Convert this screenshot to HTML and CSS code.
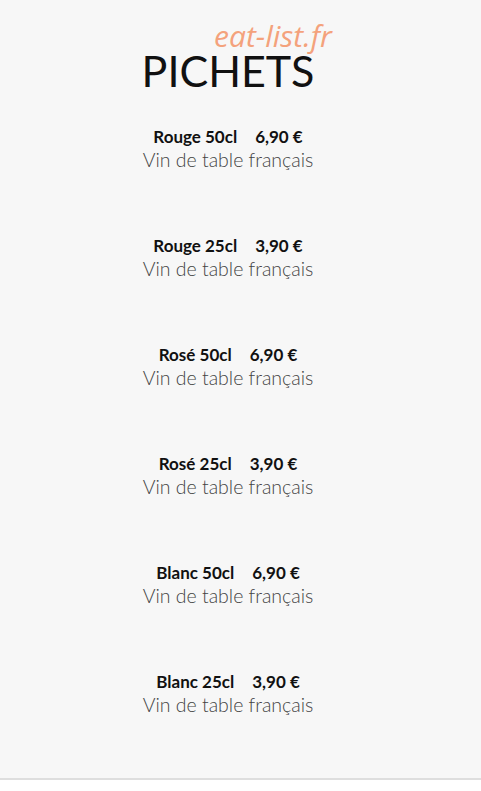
FILE: index.html
```html
<html>
<head>
    <title>Pichets</title>
    <link rel="stylesheet" href="styles.css">
</head>
<body>
    <div class="page">
        <div class="header">
            <div class="brand">eat-list.fr</div>
            <h1>PICHETS</h1>
        </div>
        <div class="menu">
            <div class="item">
                <div class="name"><span>Rouge 50cl</span><span>6,90 €</span></div>
                <div class="desc">Vin de table français</div>
            </div>
            <div class="item">
                <div class="name"><span>Rouge 25cl</span><span>3,90 €</span></div>
                <div class="desc">Vin de table français</div>
            </div>
            <div class="item">
                <div class="name"><span>Rosé 50cl</span><span>6,90 €</span></div>
                <div class="desc">Vin de table français</div>
            </div>
            <div class="item">
                <div class="name"><span>Rosé 25cl</span><span>3,90 €</span></div>
                <div class="desc">Vin de table français</div>
            </div>
            <div class="item">
                <div class="name"><span>Blanc 50cl</span><span>6,90 €</span></div>
                <div class="desc">Vin de table français</div>
            </div>
            <div class="item">
                <div class="name"><span>Blanc 25cl</span><span>3,90 €</span></div>
                <div class="desc">Vin de table français</div>
            </div>
        </div>
    </div>
</body>
</html>
```

FILE: styles.css
```css
body {
    margin: 0;
    background: #fff;
    font-family: Lato, "Noto Sans", sans-serif;
}
.page {
    background: #f7f7f7;
    border-bottom: 2px solid #dedede;
    height: 780px;
    padding-right: 25px;
    box-sizing: border-box;
}
.header {
    position: relative;
    text-align: center;
    padding-top: 42px;
}
.brand {
    position: absolute;
    top: 15px;
    left: 214px;
    font-family: "Open Sans", sans-serif;
    font-style: italic;
    font-size: 30px;
    color: #f4a27c;
}
h1 {
    margin: 0;
    font-size: 43px;
    font-weight: 400;
    color: #111;
    line-height: 58px;
}
.menu {
    display: flex;
    flex-direction: column;
    gap: 63px;
    margin-top: 26px;
    text-align: center;
}
.name {
    display: flex;
    justify-content: center;
    gap: 18px;
    font-size: 17px;
    font-weight: 700;
    color: #111;
    line-height: 21px;
}
.desc {
    font-size: 19.5px;
    font-weight: 300;
    color: #444;
    line-height: 25px;
}
```
